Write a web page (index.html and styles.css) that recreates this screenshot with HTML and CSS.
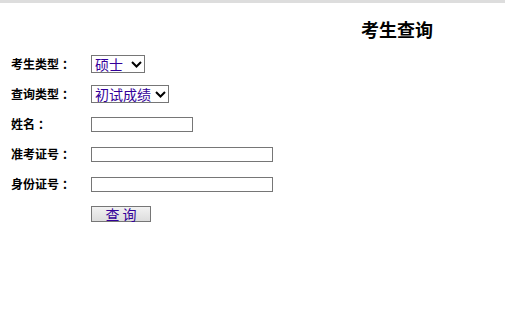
FILE: index.html
```html
<!DOCTYPE html>
<html lang="zh-CN">
<head>
  <meta charset="UTF-8">
  <title>考生查询</title>
  <link rel="stylesheet" href="styles.css">
</head>
<body>
  <div class="top-bar"></div>
  <h1 class="title">考生查询</h1>
  <form class="query-form">
    <label class="field-label" for="ks-type">考生类型<span class="colon">：</span></label>
    <div class="field">
      <span class="select-wrap">
        <select id="ks-type" class="select select-short">
          <option>硕士</option>
        </select>
        <svg class="chevron" width="11" height="7" viewBox="0 0 11 7"><path d="M1 1l4.5 4.5L10 1" fill="none" stroke="#000" stroke-width="2"/></svg>
      </span>
    </div>
    <label class="field-label" for="cx-type">查询类型<span class="colon">：</span></label>
    <div class="field">
      <span class="select-wrap">
        <select id="cx-type" class="select select-long">
          <option>初试成绩</option>
        </select>
        <svg class="chevron" width="11" height="7" viewBox="0 0 11 7"><path d="M1 1l4.5 4.5L10 1" fill="none" stroke="#000" stroke-width="2"/></svg>
      </span>
    </div>
    <label class="field-label" for="xm">姓名<span class="colon">：</span></label>
    <div class="field"><input id="xm" type="text" class="text-input short"></div>
    <label class="field-label" for="zkzh">准考证号<span class="colon">：</span></label>
    <div class="field"><input id="zkzh" type="text" class="text-input long"></div>
    <label class="field-label" for="sfzh">身份证号<span class="colon">：</span></label>
    <div class="field"><input id="sfzh" type="text" class="text-input long"></div>
    <div></div>
    <div class="field"><button type="button" class="query-btn">查 询</button></div>
  </form>
</body>
</html>
```

FILE: styles.css
```css
html {
  background: #fff;
}

body {
  margin: 0;
  font-family: "Noto Sans CJK SC", "DejaVu Sans", sans-serif;
  color: #000;
}

.top-bar {
  height: 3px;
  background: #dddddd;
}

.title {
  margin: 0;
  padding: 14px 0 0 289px;
  width: 216px;
  text-align: center;
  font-size: 18px;
  line-height: 24px;
  font-weight: bold;
}

.query-form {
  display: grid;
  grid-template-columns: 80px 1fr;
  grid-auto-rows: 30px;
  padding: 8px 0 0 11px;
  align-items: center;
}

.field-label {
  font-size: 12px;
  font-weight: bold;
  line-height: 16px;
}

.colon {
  margin-left: 3px;
}

.field {
  display: flex;
  align-items: center;
}

.select-wrap {
  position: relative;
  display: inline-block;
  height: 18px;
}

.select {
  appearance: none;
  box-sizing: border-box;
  display: block;
  height: 18px;
  margin: 0;
  padding: 0 0 0 3px;
  font-family: inherit;
  font-size: 14px;
  line-height: 16px;
  color: #330099;
  border: 1px solid #767676;
  border-radius: 0;
  background: #fff;
}

.chevron {
  position: absolute;
  right: 3px;
  top: 6px;
  pointer-events: none;
}

.select-short {
  width: 54px;
}

.select-long {
  width: 78px;
}

.text-input {
  box-sizing: border-box;
  height: 15px;
  margin: 0;
  padding: 0 2px;
  border: 1px solid #767676;
  border-radius: 0;
  font-size: 12px;
}

.text-input.short {
  width: 102px;
}

.text-input.long {
  width: 182px;
}

.query-btn {
  box-sizing: border-box;
  width: 60px;
  height: 16px;
  margin: 0;
  padding: 0;
  border: 1px solid #767676;
  border-radius: 0;
  background: linear-gradient(#f2f2f2, #dddddd);
  font-family: inherit;
  font-size: 14px;
  line-height: 14px;
  color: #330099;
}
```
